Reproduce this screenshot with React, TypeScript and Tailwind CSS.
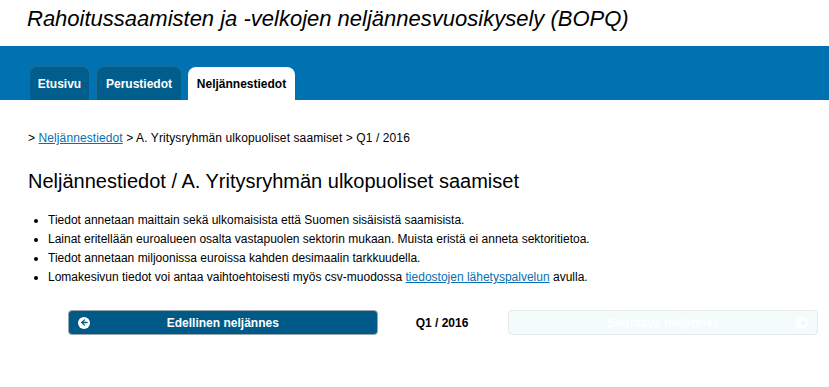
import { ArrowLeft, ArrowRight } from "lucide-react";

const BULLETS = [
    "Tiedot annetaan maittain sekä ulkomaisista että Suomen sisäisistä saamisista.",
    "Lainat eritellään euroalueen osalta vastapuolen sektorin mukaan. Muista eristä ei anneta sektoritietoa.",
    "Tiedot annetaan miljoonissa euroissa kahden desimaalin tarkkuudella.",
];

const TABS = [
    { label: "Etusivu", active: false, w: "w-[61px]" },
    { label: "Perustiedot", active: false, w: "w-[86px]" },
    { label: "Neljännestiedot", active: true, w: "w-[107px]" },
];

export default function App() {
    return (
        <div className="w-[829px] h-[387px] bg-white text-black font-['Liberation_Sans',Arial,sans-serif]">
            {/* Header */}
            <div className="h-[46px] pl-[27px] pt-[6px]">
                <h1 className="text-[22px] italic leading-[26px]">Rahoitussaamisten ja -velkojen neljännesvuosikysely (BOPQ)</h1>
            </div>

            {/* Tabs */}
            <div className="h-[54px] bg-[#0071b1] flex items-end pl-[29px] gap-[6px]">
                {TABS.map((tab) => (
                    <div
                        key={tab.label}
                        className={
                            tab.active
                                ? `${tab.w} h-[33px] bg-white rounded-t-[8px] flex items-center justify-center text-[12px] font-bold text-black`
                                : `${tab.w} h-[34px] bg-[#005d8c] border border-b-0 border-[#1a6d99] rounded-t-[8px] flex items-center justify-center text-[12px] font-bold text-white`
                        }
                    >
                        {tab.label}
                    </div>
                ))}
            </div>

            {/* Content */}
            <div className="pl-[28px] pr-[11px]">
                <div className="pt-[31px] text-[12px] leading-[14px] tracking-[0.1px]">
                    &gt; <a className="text-[#0a6fb0] underline">Neljännestiedot</a> &gt; A. Yritysryhmän ulkopuoliset saamiset &gt; Q1 / 2016
                </div>

                <h2 className="mt-[24px] text-[20px] leading-[24px]">Neljännestiedot / A. Yritysryhmän ulkopuoliset saamiset</h2>

                <ul className="mt-[18px] pl-[20px] list-disc text-[12px] leading-[19px]">
                    {BULLETS.map((b) => (
                        <li key={b}>{b}</li>
                    ))}
                    <li>
                        Lomakesivun tiedot voi antaa vaihtoehtoisesti myös csv-muodossa{" "}
                        <a className="text-[#0a6fb0] underline">tiedostojen lähetyspalvelun</a> avulla.
                    </li>
                </ul>

                {/* Navigation */}
                <div className="mt-[23px] flex items-center pl-[40px]">
                    <button className="relative w-[310px] h-[25px] bg-[#005a87] border border-[#9aa6ad] rounded-[4px] text-white text-[12px] font-bold flex items-center justify-center">
                        <span className="absolute left-[9px] top-1/2 -translate-y-1/2 w-[12px] h-[12px] rounded-full bg-white flex items-center justify-center">
                            <ArrowLeft className="w-[9px] h-[9px] text-[#005a87]" strokeWidth={3.5} />
                        </span>
                        Edellinen neljännes
                    </button>
                    <div className="w-[131px] text-center text-[12px] font-bold pr-[2px]">Q1 / 2016</div>
                    <button className="relative w-[310px] h-[25px] bg-[#f4fbfb] border border-[#e6e9ea] rounded-[4px] text-white text-[12px] font-bold flex items-center justify-center">
                        Seuraava neljännes
                        <span className="absolute right-[9px] top-1/2 -translate-y-1/2 w-[12px] h-[12px] rounded-full bg-white flex items-center justify-center">
                            <ArrowRight className="w-[9px] h-[9px] text-[#eef6f6]" strokeWidth={3.5} />
                        </span>
                    </button>
                </div>
            </div>
        </div>
    );
}
